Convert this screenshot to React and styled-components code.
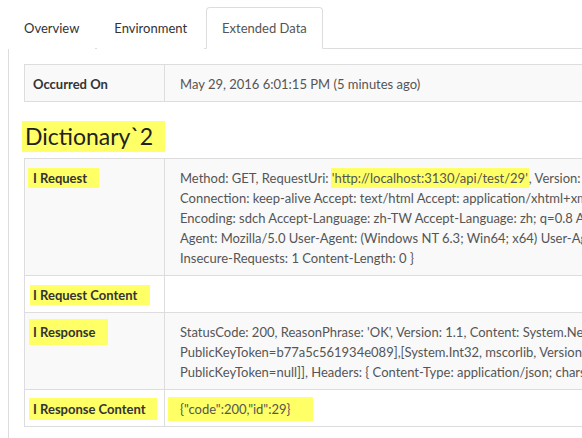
import React from 'react';
import styled, { createGlobalStyle } from 'styled-components';

const GlobalStyle = createGlobalStyle`
    html, body {
        margin: 0;
        padding: 0;
        background: #fff;
        overflow: hidden;
    }

    body {
        font-family: Lato, "Noto Sans", sans-serif;
        font-size: 13px;
        line-height: 20px;
        color: #555;
    }
`;

const Page = styled.div`
    width: 1000px;
    padding: 7px 0 0 8px;
`;

const Tabs = styled.ul`
    display: flex;
    margin: 0;
    padding: 0;
    list-style: none;
    border-bottom: 1px solid #ddd;
`;

const Tab = styled.li`
    margin: 0 2px -1px 0;
    padding: 10px ${p => p.$px ?? 15}px;
    border: 1px solid ${p => (p.$active ? '#ddd' : 'transparent')};
    border-bottom-color: ${p => (p.$active ? '#fff' : 'transparent')};
    border-radius: 4px 4px 0 0;
    background: #fff;
    color: ${p => (p.$active ? '#555' : '#333')};
`;

const Panel = styled.div`
    border-left: 1px solid #ddd;
    padding: 15px 0 15px 15px;
`;

const Table = styled.table`
    width: 100%;
    table-layout: fixed;
    border-collapse: collapse;
    border: 1px solid #ddd;
`;

const Row = styled.tr`
    background: ${p => (p.$striped ? '#f9f9f9' : '#fff')};
`;

const Label = styled.th`
    width: 131px;
    padding: 9px 0 7px 8px;
    border: 1px solid #ddd;
    text-align: left;
    vertical-align: top;
    font-weight: 700;
    color: #333;
    white-space: nowrap;
`;

const Value = styled.td`
    padding: 9px 16px 7px 15px;
    border: 1px solid #ddd;
    vertical-align: top;
    white-space: nowrap;
`;

const Line = styled.div`
    white-space: nowrap;
`;

const Mark = styled.span`
    background: #ffff66;
    padding: ${p => p.$py ?? 2}px ${p => p.$pr ?? 0}px ${p => p.$py ?? 2}px ${p => p.$pl ?? 0}px;
    margin-left: ${p => -(p.$pl ?? 0)}px;
`;

const Heading = styled.h2`
    margin: 19px 0 6px -2px;
    font-size: 23px;
    font-weight: 400;
    line-height: 31px;
    color: #222;
`;

const HeadMark = styled.span`
    display: inline-block;
    background: #ffff66;
    padding: 0 12px 0 3px;
`;

const requestLines = [
    <>Method: GET, RequestUri: <Mark $py={2} $pl={1} $pr={1}>'http://localhost:3130/api/test/29'</Mark>, Version: 1.1, Content: System.Net.Http.StreamContent, Headers: {'{'}</>,
    'Connection: keep-alive Accept: text/html Accept: application/xhtml+xml Accept: application/xml; q=0.9 Accept: image/webp Accept: */*; q=0.8 Accept-',
    'Encoding: sdch Accept-Language: zh-TW Accept-Language: zh; q=0.8 Accept-Language: en-US; q=0.6 Host: localhost:3130 User-',
    'Agent: Mozilla/5.0 User-Agent: (Windows NT 6.3; Win64; x64) User-Agent: AppleWebKit/537.36 User-Agent: (KHTML, like Gecko) Upgrade-',
    'Insecure-Requests: 1 Content-Length: 0 }',
];

const responseLines = [
    "StatusCode: 200, ReasonPhrase: 'OK', Version: 1.1, Content: System.Net.Http.ObjectContent`1[[System.Collections.Generic.Dictionary`2[[System.String, mscorlib, Version=4.0.0.0, Culture=neutral,",
    'PublicKeyToken=b77a5c561934e089],[System.Int32, mscorlib, Version=4.0.0.0, Culture=neutral, PublicKeyToken=b77a5c561934e089]], mscorlib, Version=4.0.0.0, Culture=neutral,',
    'PublicKeyToken=null]], Headers: { Content-Type: application/json; charset=utf-8 }',
];

const App = () => {
    return (
        <Page>
            <GlobalStyle />
            <Tabs>
                <Tab>Overview</Tab>
                <Tab $px={16}>Environment</Tab>
                <Tab $active>Extended Data</Tab>
            </Tabs>
            <Panel>
                <Table>
                    <tbody>
                        <Row $striped>
                            <Label>Occurred On</Label>
                            <Value>May 29, 2016 6:01:15 PM (5 minutes ago)</Value>
                        </Row>
                    </tbody>
                </Table>

                <Heading><HeadMark>Dictionary`2</HeadMark></Heading>

                <Table>
                    <tbody>
                        <Row $striped>
                            <Label><Mark $py={2} $pl={5} $pr={12}>I Request</Mark></Label>
                            <Value>
                                {requestLines.map((l, i) => <Line key={i}>{l}</Line>)}
                            </Value>
                        </Row>
                        <Row>
                            <Label><Mark $py={2} $pl={3} $pr={13}>I Request Content</Mark></Label>
                            <Value />
                        </Row>
                        <Row $striped>
                            <Label><Mark $py={5} $pl={4} $pr={13}>I Response</Mark></Label>
                            <Value>
                                {responseLines.map((l, i) => <Line key={i}>{l}</Line>)}
                            </Value>
                        </Row>
                        <Row>
                            <Label><Mark $py={3} $pl={4} $pr={11}>I Response Content</Mark></Label>
                            <Value><Mark $py={4} $pl={12} $pr={23}>{'{"code":200,"id":29}'}</Mark></Value>
                        </Row>
                    </tbody>
                </Table>
            </Panel>
        </Page>
    );
};

export default App;
